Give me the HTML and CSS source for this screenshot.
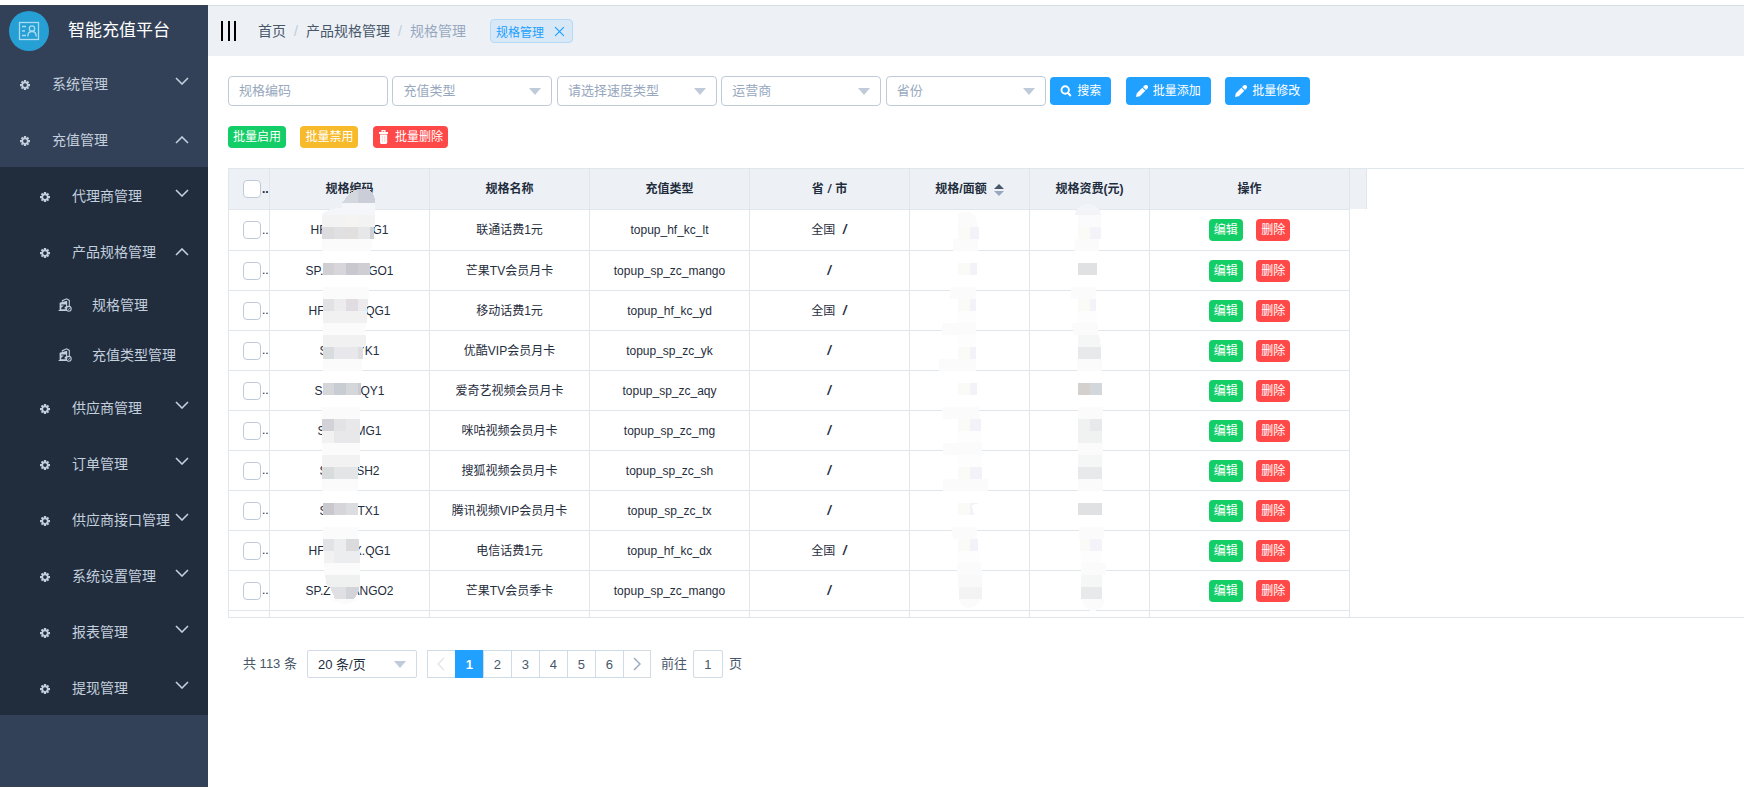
FILE: index.html
```html
<!DOCTYPE html>
<html lang="zh-CN">
<head>
<meta charset="utf-8">
<title>智能充值平台</title>
<link rel="stylesheet" href="styles.css">
</head>
<body>
<svg class="defs" aria-hidden="true">
  <symbol id="gear" viewBox="0 0 16 16"><path fill="currentColor" fill-rule="evenodd" d="M6.200 0h3.600v2.200l1 .5 1.600-1.600 2.300 2.300-1.600 1.600.5 1.200H16v3.600h-2.400l-.5 1.200 1.600 1.600-2.300 2.300-1.600-1.600-1 .5V16H6.200v-2.200l-1-.5-1.600 1.600-2.300-2.300 1.600-1.600-.5-1.200H0V6.200h2.400l.5-1.200-1.600-1.600 2.300-2.300 1.600 1.600 1-.5zM8 5a3 3 0 1 0 0 6 3 3 0 0 0 0-6z"/></symbol>
  <symbol id="bag" viewBox="0 0 26 26"><path d="M8 7V5l8-3.500 5 3V16" fill="none" stroke="currentColor" stroke-width="2"/><path fill="currentColor" fill-rule="evenodd" d="M3 9l14-4v19H0l3-2zM6 12v2h5l-5 4v3h8v-2h-3l4-4v-3z"/><circle cx="20" cy="20" r="4.500" fill="#212d3d" stroke="currentColor" stroke-width="2"/><path d="M18 20l1.500 1.500 2.500-3" fill="none" stroke="currentColor" stroke-width="1.500"/></symbol>
  <symbol id="down" viewBox="0 0 14 8"><path d="M1 1l6 6 6-6" fill="none" stroke="currentColor" stroke-width="1.600"/></symbol>
  <symbol id="up" viewBox="0 0 14 8"><path d="M1 7l6-6 6 6" fill="none" stroke="currentColor" stroke-width="1.600"/></symbol>
  <symbol id="pencil" viewBox="0 0 12 12"><path fill="currentColor" d="M0 12l.8-3.800L6.300 2.700l3 3-5.500 5.500zM7 2l1.500-1.400a2 2 0 0 1 2.900 2.900L10 5z"/></symbol>
  <symbol id="search" viewBox="0 0 12 12"><circle cx="5.200" cy="5" r="3.700" fill="none" stroke="currentColor" stroke-width="1.900"/><path d="M7.800 7.800l3 3.200" stroke="currentColor" stroke-width="2"/></symbol>
  <symbol id="trash" viewBox="0 0 12 14"><path fill="currentColor" fill-rule="evenodd" d="M3.500 2V0h4v2H10v2H1V2zM4.700 1.200V2h1.600v-.8zM2 4.500h7.200V13l-1 1H3l-1-1z"/><path d="M4.300 6v6M6.800 6v6" stroke="#ffb0b0" stroke-width=".6"/></symbol>
</svg>
<div class="app">
  <aside class="side">
    <div class="brand">
      <svg class="logo" viewBox="0 0 40 40" aria-hidden="true"><circle cx="20" cy="20" r="20" fill="#269fd5"/><g fill="none" stroke="#a9dcf2" stroke-width="1.300"><rect x="10.500" y="11.500" width="19" height="17"/><path d="M13 15.500h4M13 20h3M13 24.500h4"/><circle cx="23" cy="17.500" r="2.700"/><path d="M18.800 25.500c0-3 1.800-5 4.200-5s4.200 2 4.200 5"/></g></svg>
      <h1>智能充值平台</h1>
    </div>
    <nav>
      <a class="item" href="#"><svg class="gear"><use href="#gear"/></svg><span>系统管理</span><svg class="arrow"><use href="#down"/></svg></a>
      <a class="item" href="#"><svg class="gear"><use href="#gear"/></svg><span>充值管理</span><svg class="arrow open"><use href="#up"/></svg></a>
      <div class="sub">
        <a class="item" href="#"><svg class="gear"><use href="#gear"/></svg><span>代理商管理</span><svg class="arrow"><use href="#down"/></svg></a>
        <a class="item" href="#"><svg class="gear"><use href="#gear"/></svg><span>产品规格管理</span><svg class="arrow open"><use href="#up"/></svg></a>
        <a class="item leaf" href="#"><svg class="bag"><use href="#bag"/></svg><span>规格管理</span></a>
        <a class="item leaf" href="#"><svg class="bag"><use href="#bag"/></svg><span>充值类型管理</span></a>
        <a class="item" href="#"><svg class="gear"><use href="#gear"/></svg><span>供应商管理</span><svg class="arrow"><use href="#down"/></svg></a>
        <a class="item" href="#"><svg class="gear"><use href="#gear"/></svg><span>订单管理</span><svg class="arrow"><use href="#down"/></svg></a>
        <a class="item" href="#"><svg class="gear"><use href="#gear"/></svg><span>供应商接口管理</span><svg class="arrow"><use href="#down"/></svg></a>
        <a class="item" href="#"><svg class="gear"><use href="#gear"/></svg><span>系统设置管理</span><svg class="arrow"><use href="#down"/></svg></a>
        <a class="item" href="#"><svg class="gear"><use href="#gear"/></svg><span>报表管理</span><svg class="arrow"><use href="#down"/></svg></a>
        <a class="item" href="#"><svg class="gear"><use href="#gear"/></svg><span>提现管理</span><svg class="arrow"><use href="#down"/></svg></a>
      </div>
    </nav>
  </aside>
  <main class="main">
    <header class="top">
      <button class="burger" type="button" aria-label="菜单"><i></i><i></i><i></i></button>
      <nav class="crumbs"><a href="#">首页</a><i>/</i><a href="#">产品规格管理</a><i>/</i><span>规格管理</span></nav>
      <div class="tag"><a href="#">规格管理</a><button type="button" aria-label="关闭"><svg viewBox="0 0 10 10"><path d="M1 1l8 8M9 1l-8 8" stroke="currentColor" stroke-width="1.100"/></svg></button></div>
    </header>
    <section class="content">
      <form class="filters">
        <input class="field" type="text" placeholder="规格编码" aria-label="规格编码">
        <span class="pick"><select class="field" aria-label="充值类型"><option>充值类型</option></select></span>
        <span class="pick"><select class="field" aria-label="速度类型"><option>请选择速度类型</option></select></span>
        <span class="pick"><select class="field" aria-label="运营商"><option>运营商</option></select></span>
        <span class="pick"><select class="field" aria-label="省份"><option>省份</option></select></span>
        <button class="btn blue" type="button"><svg><use href="#search"/></svg>搜索</button>
        <button class="btn blue next" type="button"><svg><use href="#pencil"/></svg>批量添加</button>
        <button class="btn blue next" type="button"><svg><use href="#pencil"/></svg>批量修改</button>
      </form>
      <div class="batch">
        <button class="btn mini green" type="button">批量启用</button>
        <button class="btn mini amber next" type="button">批量禁用</button>
        <button class="btn mini red next" type="button"><svg><use href="#trash"/></svg>批量删除</button>
      </div>
      <div class="grid">
        <div class="grid-head">
          <table>
            <colgroup><col class="c41"><col class="c160"><col class="c160"><col class="c160"><col class="c160"><col class="c120"><col class="c120"><col class="c200"></colgroup>
            <thead><tr>
              <th class="check"><input type="checkbox" aria-label="全选">..</th><th>规格编码</th><th>规格名称</th><th>充值类型</th><th>省 <b>/</b> 市</th>
              <th>规格/面额<svg class="sort" viewBox="0 0 10 12"><path d="M5 0l5 5H0z" fill="#48576a"/><path d="M0 7h10l-5 5z" fill="#97a8be"/></svg></th><th>规格资费(元)</th><th>操作</th>
            </tr></thead>
          </table>
          <div class="gutter"></div>
        </div>
        <div class="grid-body">
          <table>
            <colgroup><col class="c41"><col class="c160"><col class="c160"><col class="c160"><col class="c160"><col class="c120"><col class="c120"><col class="c200"></colgroup>
            <tbody>
              <tr><td class="check"><input type="checkbox" aria-label="选择">..</td><td><div class="code w78"><span>HF.</span><span>QG1</span></div></td><td>联通话费1元</td><td>topup_hf_kc_lt</td><td><span class="area">全国</span><b>/</b></td><td></td><td></td><td><button class="btn mini green" type="button">编辑</button> <button class="btn mini red next" type="button">删除</button></td></tr>
              <tr><td class="check"><input type="checkbox" aria-label="选择">..</td><td><div class="code w88"><span>SP.</span><span>GO1</span></div></td><td>芒果TV会员月卡</td><td>topup_sp_zc_mango</td><td><b>/</b></td><td></td><td></td><td><button class="btn mini green" type="button">编辑</button> <button class="btn mini red next" type="button">删除</button></td></tr>
              <tr><td class="check"><input type="checkbox" aria-label="选择">..</td><td><div class="code w82"><span>HF.</span><span>QG1</span></div></td><td>移动话费1元</td><td>topup_hf_kc_yd</td><td><span class="area">全国</span><b>/</b></td><td></td><td></td><td><button class="btn mini green" type="button">编辑</button> <button class="btn mini red next" type="button">删除</button></td></tr>
              <tr><td class="check"><input type="checkbox" aria-label="选择">..</td><td><div class="code w60"><span>S</span><span>YK1</span></div></td><td>优酷VIP会员月卡</td><td>topup_sp_zc_yk</td><td><b>/</b></td><td></td><td></td><td><button class="btn mini green" type="button">编辑</button> <button class="btn mini red next" type="button">删除</button></td></tr>
              <tr><td class="check"><input type="checkbox" aria-label="选择">..</td><td><div class="code w70"><span>S</span><span>QY1</span></div></td><td>爱奇艺视频会员月卡</td><td>topup_sp_zc_aqy</td><td><b>/</b></td><td></td><td></td><td><button class="btn mini green" type="button">编辑</button> <button class="btn mini red next" type="button">删除</button></td></tr>
              <tr><td class="check"><input type="checkbox" aria-label="选择">..</td><td><div class="code w64"><span>S</span><span>MG1</span></div></td><td>咪咕视频会员月卡</td><td>topup_sp_zc_mg</td><td><b>/</b></td><td></td><td></td><td><button class="btn mini green" type="button">编辑</button> <button class="btn mini red next" type="button">删除</button></td></tr>
              <tr><td class="check"><input type="checkbox" aria-label="选择">..</td><td><div class="code w60"><span>S</span><span>SH2</span></div></td><td>搜狐视频会员月卡</td><td>topup_sp_zc_sh</td><td><b>/</b></td><td></td><td></td><td><button class="btn mini green" type="button">编辑</button> <button class="btn mini red next" type="button">删除</button></td></tr>
              <tr><td class="check"><input type="checkbox" aria-label="选择">..</td><td><div class="code w60"><span>S</span><span>TX1</span></div></td><td>腾讯视频VIP会员月卡</td><td>topup_sp_zc_tx</td><td><b>/</b></td><td></td><td></td><td><button class="btn mini green" type="button">编辑</button> <button class="btn mini red next" type="button">删除</button></td></tr>
              <tr><td class="check"><input type="checkbox" aria-label="选择">..</td><td><div class="code w82"><span>HF.</span><span>X.QG1</span></div></td><td>电信话费1元</td><td>topup_hf_kc_dx</td><td><span class="area">全国</span><b>/</b></td><td></td><td></td><td><button class="btn mini green" type="button">编辑</button> <button class="btn mini red next" type="button">删除</button></td></tr>
              <tr><td class="check"><input type="checkbox" aria-label="选择">..</td><td><div class="code w88"><span>SP.Z</span><span>ANGO2</span></div></td><td>芒果TV会员季卡</td><td>topup_sp_zc_mango</td><td><b>/</b></td><td></td><td></td><td><button class="btn mini green" type="button">编辑</button> <button class="btn mini red next" type="button">删除</button></td></tr>
              <tr><td></td><td></td><td></td><td></td><td></td><td></td><td></td><td></td></tr>
            </tbody>
          </table>
        </div>
        <svg class="mask" width="1140" height="450" viewBox="228 168 1140 450" aria-hidden="true" shape-rendering="crispEdges">
          <!-- code column -->
          <path fill="#d3d7de" d="M342 203q8-12 16-14v14z"/><path fill="#cbced8" d="M358 189h9q8 2 8 14h-17z"/>
          <path fill="#f5f6f9" d="M342 203h33v12h-53q4-7 20-7z"/>
          <path fill="#f3f3f4" d="M322 215h53v12h-53z"/><path fill="#f5f4f1" d="M346 215h12v12h-12z"/>
          <path fill="#dcdcde" d="M322 227h12v12h-12z"/><path fill="#e0e0e2" d="M334 227h12v12h-12z"/><path fill="#e2e0df" d="M346 227h12v12h-12z"/><path fill="#e6e7e9" d="M358 227h12v12h-12z"/><path fill="#cfcfd4" d="M370 227h4v12h-4z"/>
          <path fill="#fbfbfb" d="M322 239h51l-2 12h-49zM323 287h46v12h-46zM323 323h43l-1 12h-42zM323 359h39v12h-39zM322 407h38v12h-38zM322 443h38v12h-38zM322 479h36v12h-36zM323 527h35v12h-35zM324 563h36v12h-36zM331 599h27q-10 8-22 3z"/>
          <path fill="#cfcfd4" d="M323 263h11v12h-11z"/><path fill="#d8d5db" d="M334 263h12v12h-12z"/><path fill="#c9c8d0" d="M346 263h12v12h-12z"/><path fill="#ceced3" d="M358 263h12v12h-12z"/>
          <path fill="#e2e2e5" d="M323 299h11v12h-11z"/><path fill="#ececef" d="M334 299h12v12h-12z"/><path fill="#e0dce1" d="M346 299h12v12h-12z"/><path fill="#ebebed" d="M358 299h10l-1 12h-9z"/>
          <path fill="#f1f1f2" d="M323 311h44v12h-44zM323 335h43v12h-43z"/>
          <path fill="#d8dcdf" d="M323 347h11v12h-11z"/><path fill="#e7e7ec" d="M334 347h24v12h-24z"/><path fill="#dededf" d="M358 347h5v12h-5z"/>
          <path fill="#d5d6d9" d="M323 383h11v12h-11zM346 383h12v12h-12z"/><path fill="#c8ccd3" d="M334 383h12v12h-12zM358 383h3v12h-3z"/>
          <path fill="#d3d2d8" d="M322 419h12v12h-12z"/><path fill="#e3e3e6" d="M334 419h12v12h-12z"/><path fill="#e8e8ea" d="M346 419h14v12h-14zM334 431h26v12h-26z"/><path fill="#f2f2f3" d="M322 431h12v12h-12zM322 455h38v12h-38z"/>
          <path fill="#d9dcdd" d="M322 467h12v12h-12z"/><path fill="#e4e5e7" d="M334 467h24v12h-24z"/>
          <path fill="#c9c8ce" d="M323 503h11v12h-11z"/><path fill="#d5d5da" d="M334 503h12v12h-12z"/><path fill="#dcdde1" d="M346 503h12v12h-12z"/>
          <path fill="#e2e3e6" d="M323 539h11v12h-11z"/><path fill="#ecedef" d="M334 539h12v12h-12zM334 551h26v12h-26z"/><path fill="#dbdbde" d="M346 539h13v12h-13z"/><path fill="#f2f2f2" d="M324 551h10v12h-10z"/>
          <path fill="#eff0f0" d="M325 575h35v12h-33z"/><path fill="#e0dfe4" d="M330 587h16v12h-11z"/><path fill="#d3d3da" d="M346 587h13q-1 8-5 12h-8z"/>
          <!-- face value column -->
          <path fill="#fbfbfc" d="M958 220v-6q9-5 17 1l3 12h-20z"/>
          <path fill="#fafaf7" d="M958 227h12v12h-12zM958 263h12v12h-12zM958 299h12v12h-12zM958 347h12v12h-12zM958 383h12v12h-12zM958 419h12v12h-12zM958 467h12v12h-12zM958 503h12v12h-12zM958 539h12v12h-12z"/>
          <path fill="#f2f2f8" d="M970 227h9v12h-9zM970 263h7v12h-7zM970 299h6v12h-6zM970 347h6v12h-6zM970 383h7v12h-7zM970 419h11v12h-11zM970 467h12v12h-12zM970 503h10l-8 2 2 10h-4zM970 539h8v12h-8z"/>
          <path fill="#fbfbfb" d="M953 239h25v12h-25zM951 287h25v12h-27zM943 323h33v12h-35zM939 359h37v12h-37zM942 407h37l1 12h-37zM943 443h39v12h-39zM943 479h45v12h-45zM951 527h26v12h-24zM957 563h24l1 12h-25zM959 599h22q-4 9-12 9t-10-9z"/>
          <path fill="#fdfdfd" d="M958 311h18v12h-18zM958 335h18v12h-18zM958 431h23v12h-23zM958 455h24v12h-24zM958 551h22v12h-22z"/><path fill="#f9f9fa" d="M958 575h24v12h-24z"/><path fill="#f3f3f4" d="M959 587h23v12h-23z"/>
          <!-- fee column -->
          <path fill="#f3f4f8" d="M1075 215q2-11 13-11t13 11z"/><path fill="#fbfbfd" d="M1078 215h23v12h-23z"/>
          <path fill="#fafaf7" d="M1078 227h12v12h-12zM1078 299h12v12h-12zM1080 539h10v12h-10z"/><path fill="#f4f3f9" d="M1090 227h11v12h-11zM1090 299h6v12h-6zM1090 539h12v12h-12z"/>
          <path fill="#fbfbfb" d="M1075 239h24v12h-25zM1071 287h25v12h-25zM1072 323h26v12h-25zM1077 359h25v12h-25zM1078 407h25v12h-25zM1078 443h25v12h-25zM1078 479h25v12h-25zM1079 527h25v12h-25zM1081 563h25v12h-25zM1082 599h24q-4 12-13 12t-11-12z"/>
          <path fill="#e0e1e3" d="M1078 263h19v12h-19zM1078 503h24v12h-24z"/><path fill="#fdfdfd" d="M1078 311h19v12h-19zM1081 551h21v12h-21z"/><path fill="#f5f6f6" d="M1078 335h21l2 12h-23zM1078 455h24v12h-24zM1081 575h21v12h-21z"/>
          <path fill="#e8e9ea" d="M1078 347h23v12h-23zM1090 419h12v12h-12zM1078 467h24v12h-24zM1081 587h21v12h-21z"/><path fill="#d3d0ce" d="M1078 383h12v12h-12z"/><path fill="#d2d7dc" d="M1090 383h12v12h-12z"/><path fill="#f0f2f2" d="M1078 419h12v12h-12zM1078 431h24v12h-24z"/>
        </svg>
      </div>
      <div class="pages">
        <span>共 113 条</span>
        <span class="pick size"><select aria-label="每页条数"><option>20 条/页</option></select></span>
        <div class="pager">
          <button type="button" aria-label="上一页" disabled><svg viewBox="0 0 8 14"><path d="M7 1L1 7l6 6" fill="none" stroke="currentColor" stroke-width="1.400"/></svg></button><button class="on" type="button">1</button><button type="button">2</button><button type="button">3</button><button type="button">4</button><button type="button">5</button><button type="button">6</button><button class="fwd" type="button" aria-label="下一页"><svg viewBox="0 0 8 14"><path d="M1 1l6 6-6 6" fill="none" stroke="currentColor" stroke-width="1.400"/></svg></button>
        </div>
        <label class="jump">前往<input type="text" value="1">页</label>
      </div>
    </section>
  </main>
</div>
</body>
</html>
```
FILE: styles.css
```css
* { box-sizing: border-box; }
body { margin: 0; background: #fff; color: #1f2d3d; font-family: "Liberation Sans", "Noto Sans CJK SC", sans-serif; font-size: 16px; }
a { color: inherit; text-decoration: none; }
i { font-style: normal; }
button, input, select { font-family: inherit; margin: 0; }
button { border: 0; padding: 0; background: none; color: inherit; cursor: pointer; }
.defs { display: none; }
.app { display: flex; min-height: 100vh; padding-top: 5px; }

.side { flex: none; width: 208px; background: #324157; color: #c3cfdd; }
.brand { display: flex; align-items: center; gap: 19px; height: 50px; padding: 2px 9px 0; color: #fff; }
.brand h1 { margin: 0; font-size: 17px; font-weight: 400; line-height: 24px; }
.logo { width: 40px; height: 40px; }
.item { display: flex; align-items: center; height: 56px; padding: 2px 19px 0 20px; font-size: 14px; line-height: 20px; white-space: nowrap; }
.item svg { flex: none; }
.gear { width: 10px; height: 10px; margin: 2px 22px 0 0; }
.arrow { width: 14px; height: 8px; margin: 0 0 6px auto; }
.arrow.open { margin-bottom: 0; }
.sub { background: #212d3d; }
.sub .item { padding-left: 40px; }
.sub .leaf { height: 50px; padding-left: 58px; }
.bag { width: 14px; height: 14px; margin-right: 20px; }

.main { flex: 1; min-width: 0; }
.top { display: flex; align-items: center; height: 51px; padding-left: 13px; background: #edf1f6; border-top: 1px solid #d5dde2; }
.burger { display: flex; justify-content: space-between; width: 15px; height: 20px; margin-right: 22px; }
.burger i { width: 2px; height: 20px; background: #000; }
.crumbs { display: flex; color: #48576a; font-size: 14px; line-height: 20px; }
.crumbs i { width: 20px; text-align: center; color: #bfcbd9; }
.crumbs span { color: #97a8be; }
.tag { display: flex; align-items: center; gap: 10px; height: 24px; margin-left: 24px; padding: 0 7px 0 5px; border: 1px solid #b4daf8; border-radius: 4px; background: #d8e8f6; color: #20a0ff; font-size: 12px; }
.tag button { display: flex; }
.tag svg { width: 11px; height: 11px; }

.content { padding: 19px 0 0 20px; }
.filters { display: block; height: 30px; line-height: 30px; white-space: nowrap; }
.filters > * { vertical-align: middle; }
.field { width: 160px; height: 30px; padding: 0 10px; border: 1px solid #bfcbd9; border-radius: 4px; background: #fff; color: #97a8be; font-size: 13px; line-height: 20px; appearance: none; }
.field::placeholder { color: #97a8be; }
.pick { position: relative; display: inline-flex; }
.pick::after { content: ""; position: absolute; right: 11px; top: 50%; margin-top: -3px; border: 6px solid transparent; border-top: 7px solid #bfcbd9; border-bottom: 0; pointer-events: none; }
.btn { display: inline-flex; align-items: center; justify-content: center; gap: 5px; height: 28px; padding: 0 10px; border-radius: 4px; color: #fff; font-size: 12px; line-height: 14px; }
.btn svg { width: 12px; height: 12px; }
.btn.next { margin-left: 10px; }
.mini { height: 22px; padding: 0 5px; vertical-align: middle; }
.mini svg { height: 14px; }
.blue { background: #20a0ff; }
.green { background: #13ce66; }
.amber { background: #f7ba2a; }
.red { background: #ff4949; }
.batch { margin-top: 21px; height: 22px; line-height: 20px; }

.grid { position: relative; margin-top: 20px; height: 450px; overflow: hidden; border: 1px solid #dfe6ec; border-right: 0; font-size: 12px; }
.grid-head { display: flex; }
.gutter { width: 17px; height: 40px; background: #edf1f6; border-right: 1px solid #dfe6ec; }
table { flex: none; width: 1121px; table-layout: fixed; border-collapse: separate; border-spacing: 0; }
.c41 { width: 41px; }
.c120 { width: 120px; }
.c160 { width: 160px; }
.c200 { width: 200px; }
th, td { height: 40px; padding: 0; border-right: 1px solid #dfe6ec; border-bottom: 1px solid #dfe6ec; text-align: center; line-height: 18px; white-space: nowrap; }
th, tbody tr:first-child td { height: 41px; }
th { background: #edf1f6; font-weight: 700; }
.check { padding-left: 14px; text-align: left; overflow: hidden; }
.check input { width: 18px; height: 18px; margin-right: 1px; border: 1px solid #bfcbd9; border-radius: 4px; background: #fff; appearance: none; vertical-align: middle; }
td b, th b { font-family: "Open Sans", sans-serif; font-size: 14px; font-weight: 600; line-height: 16px; }
th b { font-size: 12px; }
.area { margin-right: 7px; }
.sort { width: 10px; height: 12px; margin-left: 7px; vertical-align: middle; }
.code { display: flex; justify-content: space-between; margin: 0 auto; }
.w60 { width: 60px; }
.w64 { width: 64px; }
.w70 { width: 70px; }
.w78 { width: 78px; }
.w82 { width: 82px; }
.w88 { width: 88px; }
.mask { position: absolute; left: -1px; top: -1px; pointer-events: none; }

.pages { display: flex; align-items: center; margin-top: 32px; padding-left: 15px; color: #48576a; font-size: 13px; line-height: 28px; }
.size { margin: 0 10px; }
.size select { width: 110px; height: 28px; padding: 0 10px; border: 1px solid #d1dbe5; border-radius: 2px; background: #fff; color: #1f2d3d; font-size: 13px; appearance: none; }
.pager { display: flex; }
.pager button { display: flex; align-items: center; justify-content: center; width: 28px; height: 28px; border: 1px solid #d1dbe5; border-right: 0; font-size: 13px; }
.pager .on { border-color: #20a0ff; background: #20a0ff; color: #fff; font-weight: 700; }
.pager .fwd { border-right: 1px solid #d1dbe5; color: #97a8be; }
.pager button:disabled { color: #e4e4e4; }
.pager svg { width: 8px; height: 14px; }
.jump { margin-left: 10px; }
.jump input { width: 30px; height: 28px; margin: 0 6px; border: 1px solid #d1dbe5; border-radius: 2px; color: #48576a; font-size: 13px; text-align: center; vertical-align: top; }
```
